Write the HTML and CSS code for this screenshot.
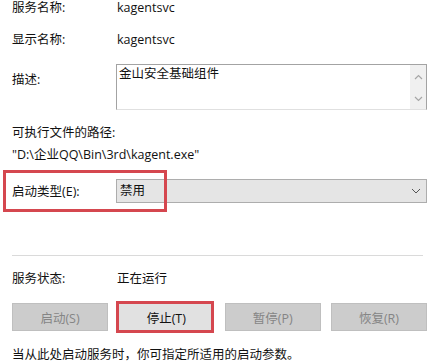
FILE: index.html
```html
<!DOCTYPE html>
<html lang="zh-CN">
<head>
<meta charset="utf-8">
<link rel="stylesheet" href="styles.css">
</head>
<body>
<div class="dialog">
  <div class="row first">
    <span class="label">服务名称:</span><span class="value">kagentsvc</span>
  </div>
  <div class="row second">
    <span class="label">显示名称:</span><span class="value">kagentsvc</span>
  </div>
  <div class="row desc">
    <span class="label desc-label">描述:</span>
    <div class="textbox">
      <div class="textbox-text">金山安全基础组件</div>
      <div class="scrollbar">
        <svg class="arrow" width="9" height="6" viewBox="0 0 9 6"><path d="M1 5 L4.5 1.5 L8 5" fill="none" stroke="#a6a6a6" stroke-width="1.2"/></svg>
        <svg class="arrow" width="9" height="6" viewBox="0 0 9 6"><path d="M1 1 L4.5 4.5 L8 1" fill="none" stroke="#a6a6a6" stroke-width="1.2"/></svg>
      </div>
    </div>
  </div>
  <div class="path-label">可执行文件的路径:</div>
  <div class="path">"D:\企业QQ\Bin\3rd\kagent.exe"</div>
  <div class="row combo-row">
    <span class="label">启动类型(E):</span>
    <div class="combo">
      <span>禁用</span>
      <svg width="10" height="6" viewBox="0 0 10 6"><path d="M1 1 L5 5 L9 1" fill="none" stroke="#555" stroke-width="1"/></svg>
    </div>
    <span class="mark mark-combo"></span>
  </div>
  <div class="separator"></div>
  <div class="row status">
    <span class="label">服务状态:</span><span class="value">正在运行</span>
  </div>
  <div class="buttons">
    <div class="btn disabled">启动(S)</div>
    <div class="btn active">停止(T)<span class="mark mark-btn"></span></div>
    <div class="btn disabled">暂停(P)</div>
    <div class="btn disabled">恢复(R)</div>
  </div>
  <div class="hint">当从此处启动服务时，你可指定所适用的启动参数。</div>
</div>
</body>
</html>
```

FILE: styles.css
```css
html, body {
  margin: 0;
  padding: 0;
  background: #ffffff;
}
body {
  width: 438px;
  height: 363px;
  overflow: hidden;
  font-family: "Open Sans", "Noto Sans CJK SC", sans-serif;
  font-size: 12.5px;
  color: #111;
}
.dialog {
  padding: 0 11px 0 12px;
}
.row {
  display: flex;
  align-items: flex-start;
  line-height: 16px;
  position: relative;
}
.label {
  width: 104px;
  flex: none;
}
.value {
  padding-left: 1px;
}
.second {
  margin-top: 16px;
}
.desc {
  margin-top: 16px;
}
.desc-label {
  padding-top: 8px;
}
.textbox {
  flex: 1;
  height: 46px;
  box-sizing: border-box;
  border: 1px solid #a3a3a3;
  border-bottom-color: #e0e0e0;
  display: flex;
}
.textbox-text {
  flex: 1;
  padding: 1px 2px;
}
.scrollbar {
  width: 16px;
  background: #f0f0f0;
  display: flex;
  flex-direction: column;
  align-items: center;
  justify-content: space-between;
  padding: 9px 0 7px;
  box-sizing: border-box;
}
.arrow {
  display: block;
}
.path-label {
  margin-top: 15px;
  line-height: 16px;
}
.path {
  margin-top: 6px;
  line-height: 16px;
}
.combo-row {
  margin-top: 16px;
  align-items: center;
  height: 24px;
}
.combo-row .label {
  padding-top: 1px;
}
.combo {
  flex: 1;
  height: 24px;
  box-sizing: border-box;
  border: 1px solid #adadad;
  background: #e5e5e5;
  display: flex;
  align-items: center;
  justify-content: space-between;
  padding: 0 5px 0 3px;
}
.mark {
  position: absolute;
  border: 3px solid #d5474f;
  box-sizing: border-box;
  pointer-events: none;
}
.mark-combo {
  left: -9px;
  top: -9px;
  width: 164px;
  height: 42px;
}
.separator {
  margin-top: 52px;
  height: 1px;
  background: #dadada;
  margin-right: 4px;
}
.status {
  margin-top: 15px;
}
.buttons {
  margin-top: 16px;
  display: flex;
  justify-content: space-between;
}
.btn {
  width: 96px;
  height: 28px;
  box-sizing: border-box;
  display: flex;
  align-items: center;
  justify-content: center;
  position: relative;
}
.btn.disabled {
  background: #cccccc;
  border: 1px solid #bfbfbf;
  color: #858585;
}
.btn.active {
  background: #e1e1e1;
  border: 1px solid #adadad;
  color: #111;
}
.mark-btn {
  left: -3px;
  top: -3px;
  right: -1px;
  bottom: -3px;
}
.hint {
  margin-top: 16px;
  line-height: 16px;
  white-space: nowrap;
}
```
